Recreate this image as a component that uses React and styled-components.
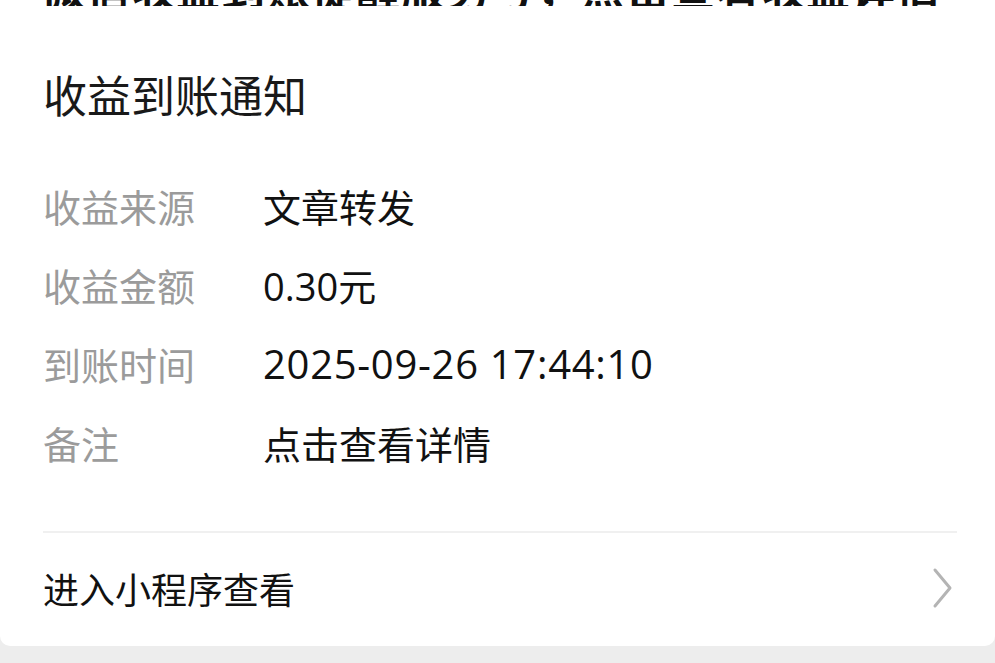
import React from 'react';
import styled, { createGlobalStyle } from 'styled-components';

const GlobalStyle = createGlobalStyle`
  html, body {
    margin: 0;
    padding: 0;
    background: #ededed;
  }
  body {
    font-family: "Noto Sans CJK SC", "Noto Sans", sans-serif;
    -webkit-font-smoothing: antialiased;
  }
`;

const Card = styled.div`
  background: #fff;
  border-radius: 0 0 10px 10px;
  padding: 0 38px 0 43px;
  height: 646px;
  box-sizing: border-box;
`;

const ClippedHeadline = styled.div`
  height: 6px;
  overflow: hidden;
  display: flex;
  align-items: flex-end;
  margin-left: -2px;
`;

const HeadlineText = styled.div`
  font-size: 44px;
  line-height: 1;
  font-weight: 700;
  color: #111;
  white-space: nowrap;
  letter-spacing: 1px;
  margin-bottom: -4px;
`;

const Title = styled.h1`
  margin: 58px 0 0;
  font-size: 44px;
  line-height: 60px;
  font-weight: 400;
  color: #191919;
`;

const Fields = styled.div`
  margin-top: 42px;
  display: flex;
  flex-direction: column;
`;

const Row = styled.div`
  display: grid;
  grid-template-columns: 220px 1fr;
  align-items: center;
  height: 79px;
`;

const Label = styled.div`
  font-size: 38px;
  color: #9b9b9b;
`;

const Value = styled.div`
  font-family: "Open Sans", "Noto Sans CJK SC", sans-serif;
  font-size: ${(p) => (p.$numeric ? '40px' : '38px')};
  letter-spacing: ${(p) => (p.$numeric ? '0.7px' : '0')};
  color: #111;
`;

const Divider = styled.div`
  margin-top: 49px;
  height: 2px;
  background: #f0f0f0;
`;

const LinkRow = styled.div`
  height: 110px;
  display: flex;
  align-items: center;
  justify-content: space-between;
  padding-right: 3px;
`;

const LinkText = styled.div`
  font-size: 36px;
  color: #111;
`;

const Chevron = () => (
  <svg width="24" height="42" viewBox="0 0 24 42" fill="none">
    <path d="M5 3 L20 21 L5 39" stroke="#b4b4b4" strokeWidth="3" strokeLinecap="round" strokeLinejoin="round" />
  </svg>
);

const fields = [
  ['收益来源', '文章转发'],
  ['收益金额', '0.30元'],
  ['到账时间', '2025-09-26 17:44:10', true],
  ['备注', '点击查看详情'],
];

export default function App() {
  return (
    <>
      <GlobalStyle />
      <Card>
        <ClippedHeadline>
          <HeadlineText>微信收益到账提醒服务号，点击查看收益详情</HeadlineText>
        </ClippedHeadline>
        <Title>收益到账通知</Title>
        <Fields>
          {fields.map(([label, value, numeric]) => (
            <Row key={label}>
              <Label>{label}</Label>
              <Value $numeric={numeric}>{value}</Value>
            </Row>
          ))}
        </Fields>
        <Divider />
        <LinkRow>
          <LinkText>进入小程序查看</LinkText>
          <Chevron />
        </LinkRow>
      </Card>
    </>
  );
}
